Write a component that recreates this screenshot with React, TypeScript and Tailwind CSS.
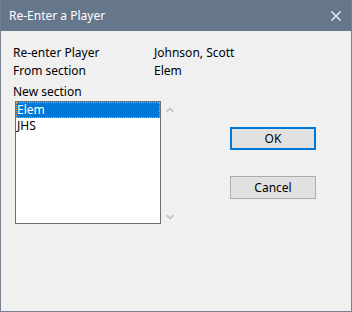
import React from "react";

const font = { fontFamily: '"Noto Sans", "Open Sans", sans-serif' };

function CloseIcon() {
  return (
    <svg width="10" height="10" viewBox="0 0 10 10" className="block">
      <path d="M0.5 0.5 L9.5 9.5 M9.5 0.5 L0.5 9.5" stroke="#ffffff" strokeWidth="1.1" fill="none" />
    </svg>
  );
}

function Chevron({ up }: { up: boolean }) {
  return (
    <svg width="8" height="6" viewBox="0 0 8 6" className="block">
      <path
        d={up ? "M0.5 5 L4 1.5 L7.5 5" : "M0.5 1 L4 4.5 L7.5 1"}
        stroke="#c2c2c2"
        strokeWidth="1.6"
        fill="none"
      />
    </svg>
  );
}

export default function App() {
  const sections = ["Elem", "JHS"];
  const selected = "Elem";

  return (
    <div
      className="flex h-[312px] w-[352px] flex-col overflow-hidden border-x border-b border-[#76808e] bg-[#f0f0f0] text-[12px] text-black"
      style={font}
    >
      {/* title bar */}
      <div className="-mx-px flex h-[31px] shrink-0 items-center justify-between bg-[#66768b] pl-[9px] pr-[11px] text-white">
        <span className="leading-none">Re-Enter a Player</span>
        <CloseIcon />
      </div>

      <div className="flex flex-col pl-[12px] pt-[13px]">
        <div className="flex h-[18px] items-center">
          <span className="w-[141px]">Re-enter Player</span>
          <span>Johnson, Scott</span>
        </div>
        <div className="flex h-[18px] items-center">
          <span className="w-[141px]">From section</span>
          <span>Elem</span>
        </div>
        <div className="mt-[3px] flex h-[18px] items-center">New section</div>

        <div className="flex">
          <div className="ml-[2px] h-[123px] w-[146px] border border-[#6e6e6e] bg-white">
            {sections.map((s) => (
              <div
                key={s}
                className={
                  s === selected
                    ? "flex h-[16px] items-center border border-dotted border-[#f0a040] bg-[#0078d7] text-white"
                    : "flex h-[16px] items-center pl-px"
                }
              >
                {s}
              </div>
            ))}
          </div>

          <div className="flex w-[69px] flex-col justify-between pb-[4px] pl-[5px] pt-[6px]">
            <Chevron up />
            <Chevron up={false} />
          </div>

          <div className="flex flex-col gap-[26px] pt-[26px]">
            <button
              type="button"
              className="h-[23px] w-[86px] border-2 border-[#0078d7] bg-[#e1e1e1] text-[12px]"
            >
              OK
            </button>
            <button
              type="button"
              className="h-[23px] w-[86px] border border-[#adadad] bg-[#e1e1e1] text-[12px]"
            >
              Cancel
            </button>
          </div>
        </div>
      </div>
    </div>
  );
}
